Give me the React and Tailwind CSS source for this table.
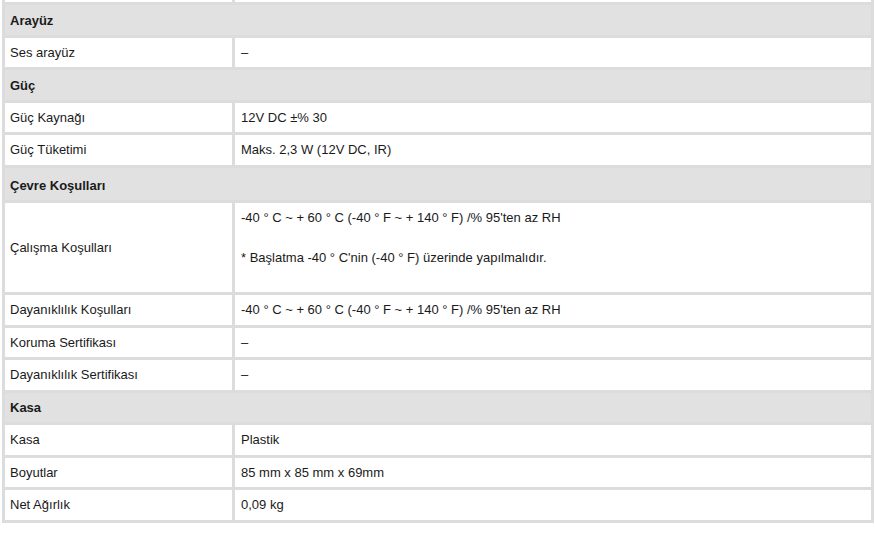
import React from "react";

const rows = [
  { type: "partial" },
  { type: "h", label: "Arayüz" },
  { label: "Ses arayüz", value: "–" },
  { type: "h", label: "Güç" },
  { label: "Güç Kaynağı", value: "12V DC ±% 30" },
  { label: "Güç Tüketimi", value: "Maks. 2,3 W (12V DC, IR)" },
  { type: "h", label: "Çevre Koşulları", tall: true },
  { type: "multi", label: "Çalışma Koşulları" },
  { label: "Dayanıklılık Koşulları", value: "-40 ° C ~ + 60 ° C (-40 ° F ~ + 140 ° F) /% 95'ten az RH" },
  { label: "Koruma Sertifikası", value: "–" },
  { label: "Dayanıklılık Sertifikası", value: "–" },
  { type: "h", label: "Kasa" },
  { label: "Kasa", value: "Plastik" },
  { label: "Boyutlar", value: "85 mm x 85 mm x 69mm" },
  { label: "Net Ağırlık", value: "0,09 kg" },
];

export default function App() {
  return (
    <div className="w-[875px] h-[552px] bg-white font-['Liberation_Sans',Arial,sans-serif] text-[13px] text-[#1a1a1a] leading-[16px]">
      <div className="ml-[2px] w-[872px] bg-[#dddcdc] px-[3px] pb-[3px] grid grid-cols-[227px_1fr] gap-[3px]">
        {rows.map((r, i) => {
          if (r.type === "partial") {
            return (
              <React.Fragment key={i}>
                <div className="h-[2px] bg-white" />
                <div className="h-[2px] bg-white" />
              </React.Fragment>
            );
          }
          if (r.type === "h") {
            return (
              <div
                key={i}
                className={`col-span-2 bg-[#e1e1e1] flex items-center pl-[5px] font-bold ${r.tall ? "h-[32px] pt-[4px]" : "h-[29.5px] pt-[1.5px]"}`}
              >
                {r.label}
              </div>
            );
          }
          if (r.type === "multi") {
            return (
              <React.Fragment key={i}>
                <div className="h-[89.5px] bg-white flex items-center pl-[5px] pt-[2px]">{r.label}</div>
                <div className="h-[89.5px] bg-white pl-[6px] pt-[7.5px]">
                  <div>-40 ° C ~ + 60 ° C (-40 ° F ~ + 140 ° F) /% 95'ten az RH</div>
                  <div className="mt-[24px]">* Başlatma -40 ° C'nin (-40 ° F) üzerinde yapılmalıdır.</div>
                </div>
              </React.Fragment>
            );
          }
          return (
            <React.Fragment key={i}>
              <div className="h-[29.5px] bg-white flex items-center pl-[5px] pt-[1px]">{r.label}</div>
              <div className="h-[29.5px] bg-white flex items-center pl-[6px] pt-[1px]">{r.value}</div>
            </React.Fragment>
          );
        })}
      </div>
    </div>
  );
}
